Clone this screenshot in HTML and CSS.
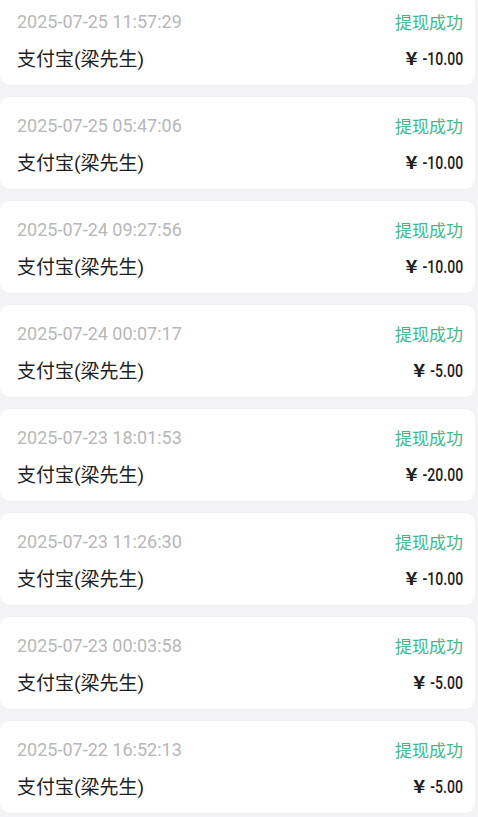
FILE: index.html
```html
<!DOCTYPE html>
<html lang="zh-CN">
<head>
  <meta charset="UTF-8" />
  <meta name="viewport" content="width=device-width, initial-scale=1.0"/>
  <title>提现记录</title>
  <link rel="stylesheet" href="styles.css">
</head>
<body>
  <div class="record-list">
    <div class="record">
      <div class="row">
        <span class="time">2025-07-25 11:57:29</span>
        <span class="status">提现成功</span>
      </div>
      <div class="row">
        <span class="account">支付宝(梁先生)</span>
        <span class="amount"><span class="yen">¥</span> -10.00</span>
      </div>
    </div>
    <div class="record">
      <div class="row">
        <span class="time">2025-07-25 05:47:06</span>
        <span class="status">提现成功</span>
      </div>
      <div class="row">
        <span class="account">支付宝(梁先生)</span>
        <span class="amount"><span class="yen">¥</span> -10.00</span>
      </div>
    </div>
    <div class="record">
      <div class="row">
        <span class="time">2025-07-24 09:27:56</span>
        <span class="status">提现成功</span>
      </div>
      <div class="row">
        <span class="account">支付宝(梁先生)</span>
        <span class="amount"><span class="yen">¥</span> -10.00</span>
      </div>
    </div>
    <div class="record">
      <div class="row">
        <span class="time">2025-07-24 00:07:17</span>
        <span class="status">提现成功</span>
      </div>
      <div class="row">
        <span class="account">支付宝(梁先生)</span>
        <span class="amount"><span class="yen">¥</span> -5.00</span>
      </div>
    </div>
    <div class="record">
      <div class="row">
        <span class="time">2025-07-23 18:01:53</span>
        <span class="status">提现成功</span>
      </div>
      <div class="row">
        <span class="account">支付宝(梁先生)</span>
        <span class="amount"><span class="yen">¥</span> -20.00</span>
      </div>
    </div>
    <div class="record">
      <div class="row">
        <span class="time">2025-07-23 11:26:30</span>
        <span class="status">提现成功</span>
      </div>
      <div class="row">
        <span class="account">支付宝(梁先生)</span>
        <span class="amount"><span class="yen">¥</span> -10.00</span>
      </div>
    </div>
    <div class="record">
      <div class="row">
        <span class="time">2025-07-23 00:03:58</span>
        <span class="status">提现成功</span>
      </div>
      <div class="row">
        <span class="account">支付宝(梁先生)</span>
        <span class="amount"><span class="yen">¥</span> -5.00</span>
      </div>
    </div>
    <div class="record">
      <div class="row">
        <span class="time">2025-07-22 16:52:13</span>
        <span class="status">提现成功</span>
      </div>
      <div class="row">
        <span class="account">支付宝(梁先生)</span>
        <span class="amount"><span class="yen">¥</span> -5.00</span>
      </div>
    </div>
  </div>
</body>
</html>
```

FILE: styles.css
```css
* {
  box-sizing: border-box;
}

body {
  margin: 0;
  background: #f3f3f6;
  font-family: Roboto, "Noto Sans CJK SC", sans-serif;
  color: #222;
  overflow: hidden;
}

.record-list {
  display: flex;
  flex-direction: column;
  gap: 12px;
  margin-top: -7px;
  padding: 0 3px 0 0;
}

.record {
  background: #fff;
  border-radius: 10px;
  padding: 16px 12px 16px 17px;
  display: flex;
  flex-direction: column;
  gap: 12px;
}

.row {
  display: flex;
  justify-content: space-between;
  align-items: center;
  height: 24px;
}

.time {
  font-size: 18px;
  color: #b7b7b7;
}

.status {
  font-size: 17px;
  color: #45b68d;
}

.account {
  font-size: 19px;
  color: #222;
}

/* narrow digits like the app's DIN-style font */
.amount {
  display: inline-block;
  font-family: Roboto, sans-serif;
  font-weight: 500;
  font-size: 18px;
  color: #1e1e1e;
  transform: scaleX(0.78);
  transform-origin: right center;
  white-space: nowrap;
}

.yen {
  display: inline-block;
  font-family: "Noto Sans CJK SC", sans-serif;
  font-weight: bold;
  margin-right: 2px;
  transform: scaleX(1.45);
  transform-origin: right center;
}
```
